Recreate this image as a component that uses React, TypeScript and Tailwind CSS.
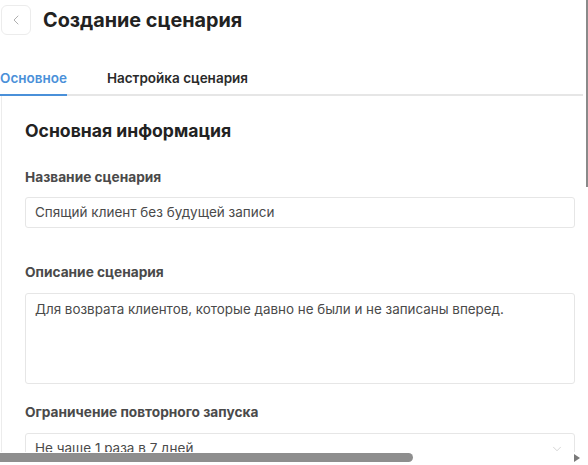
import { ChevronLeft, ChevronDown } from 'lucide-react'

const font = { fontFamily: 'Inter, "Noto Sans", sans-serif' }

function Field({ label, children, className }: { label: string; children: React.ReactNode; className: string }) {
  return (
    <div className={className}>
      <div className="text-[13.7px] leading-5 font-bold text-[#4a4a4a]">{label}</div>
      {children}
    </div>
  )
}

export default function App() {
  return (
    <div className="relative w-[588px] h-[465px] overflow-hidden bg-white" style={font}>
      {/* Header */}
      <div className="flex items-center gap-3 pt-[5px] pl-[1px]">
        <button className="w-[30px] h-[30px] flex items-center justify-center rounded-md border border-[#ececec] bg-white text-[#9a9a9a]">
          <ChevronLeft size={16} strokeWidth={1.2} />
        </button>
        <h1 className="text-[19.8px] leading-[30px] font-bold text-[#222]">Создание сценария</h1>
      </div>

      {/* Tabs */}
      <div className="mt-[25px] w-[583px] flex gap-10 border-b-2 border-[#e6e6e6]">
        <div className="-mb-[2px] pt-2 pb-[6px] border-b-2 border-[#4a90d9] text-[13.5px] leading-5 font-semibold text-[#4a90d9]">
          Основное
        </div>
        <div className="pt-2 pb-[6px] text-[13.5px] leading-5 font-semibold text-[#2a2a2a]">Настройка сценария</div>
      </div>

      {/* Card */}
      <div className="ml-[1px] w-[583px] border-l border-[#ececec] pl-[23px] pr-[9px] pt-[23px] pb-10">
        <h2 className="text-[17.6px] leading-6 font-bold text-[#222]">Основная информация</h2>

        <Field label="Название сценария" className="mt-6">
          <div className="mt-[10px] h-[31px] flex items-center px-[9px] rounded-[3px] border border-[#e6e6e6] text-[13.5px] text-[#4a4a4a]">
            Спящий клиент без будущей записи
          </div>
        </Field>

        <Field label="Описание сценария" className="mt-[34px]">
          <div className="mt-[11px] h-[91px] px-[9px] pt-[6px] rounded-[3px] border border-[#e6e6e6] text-[13.4px] leading-[18px] text-[#4a4a4a]">
            Для возврата клиентов, которые давно не были и не записаны вперед.
          </div>
        </Field>

        <Field label="Ограничение повторного запуска" className="mt-[18px]">
          <div className="mt-[11px] h-[31px] flex items-center justify-between pl-[9px] pr-[10px] rounded-[3px] border border-[#e6e6e6] text-[13.5px] text-[#4a4a4a]">
            <span>Не чаще 1 раза в 7 дней</span>
            <ChevronDown size={14} strokeWidth={1.2} className="text-[#c4c4c4]" />
          </div>
        </Field>
      </div>

      {/* Scrollbars */}
      <div className="absolute right-0 top-0 w-[2px] h-[187px] bg-[#8a8a8a]" />
      <div className="absolute left-0 bottom-0 w-full h-[13px] bg-white flex items-start">
        <div className="mt-[1px] w-[413px] h-[9px] rounded-r-full bg-[#8e8e8e]" />
        <div className="ml-auto mr-[8px] mt-[2px] w-0 h-0 border-y-[4px] border-y-transparent border-l-[6px] border-l-[#7a7a7a]" />
      </div>
    </div>
  )
}
